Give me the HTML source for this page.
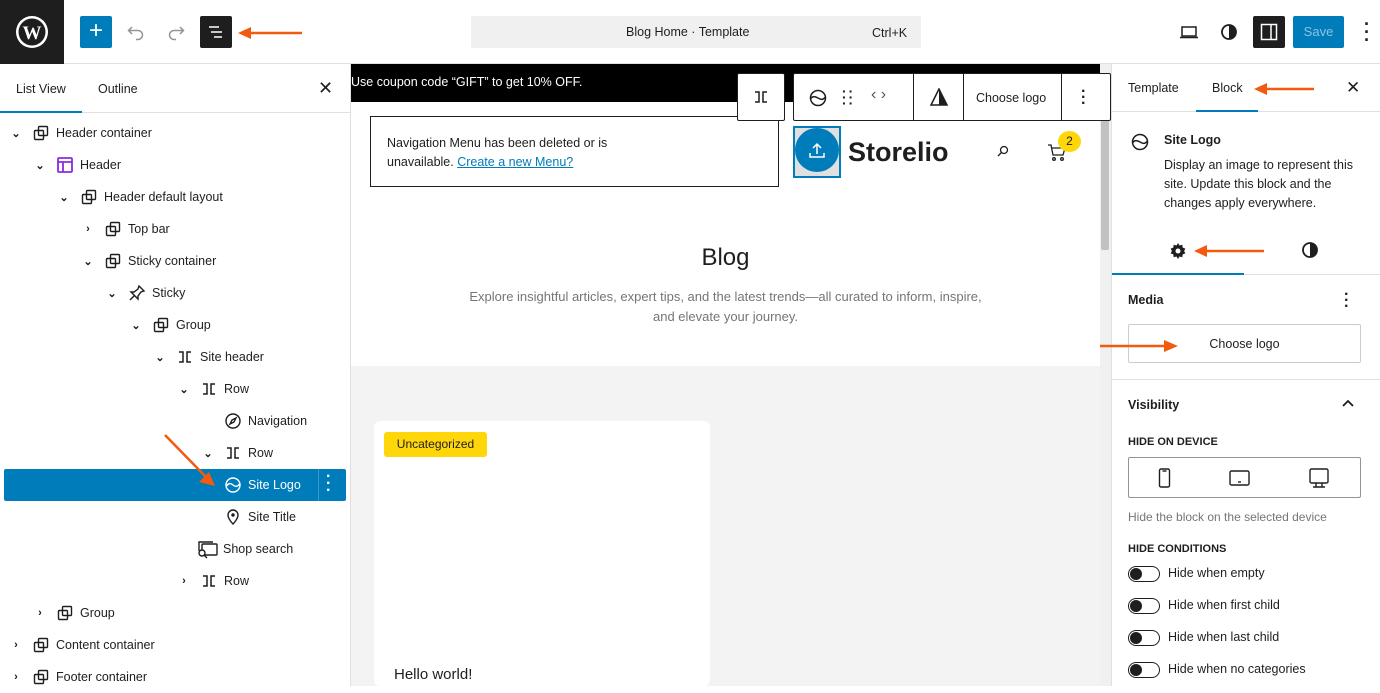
<!DOCTYPE html>
<html><head><meta charset="utf-8"><style>
*{box-sizing:border-box;margin:0;padding:0}
body{width:1380px;height:686px;overflow:hidden;background:#fff;font-family:"Liberation Sans",sans-serif;color:#1e1e1e;position:relative;font-size:12.5px}
.a{position:absolute}
.row{position:absolute;height:32px;display:flex;align-items:center;font-size:12.5px;color:#1e1e1e}
.row svg{flex:none}
.chev{width:16px;font-size:11px;text-align:center;font-weight:bold}
.lbl{margin-left:6px}
.tg{position:absolute;left:1128px;width:32px;height:16px;border:1px solid #1e1e1e;border-radius:8px}
.tg:before{content:"";position:absolute;left:1px;top:1px;width:12px;height:12px;border-radius:50%;background:#1e1e1e}
.tl{position:absolute;left:1168px;font-size:12.5px}
</style></head><body>
<div class="a" style="left:0;top:0;width:1380px;height:64px;border-bottom:1px solid #e0e0e0"></div>
<div class="a" style="left:0;top:0;width:64px;height:64px;background:#1e1e1e"></div>
<svg class="a" style="left:15px;top:15px" width="34" height="34" viewBox="0 0 34 34"><circle cx="17" cy="17" r="16" fill="#fff"/><circle cx="17" cy="17" r="13.5" fill="#1e1e1e"/><text x="17" y="24" text-anchor="middle" font-family="Liberation Serif" font-weight="bold" font-size="19" fill="#fff">W</text></svg>
<div class="a" style="left:80px;top:16px;width:32px;height:32px;background:#007cba;border-radius:2px;color:#fff;font-size:24px;line-height:30px;text-align:center">+</div>
<svg class="a" style="left:126px;top:22px" width="20" height="20" viewBox="0 0 20 20" fill="none" stroke="#949494" stroke-width="1.5"><path d="M6 5L2.5 8.5 6 12M3 8.5h9a4.5 4.5 0 010 9H10"/></svg>
<svg class="a" style="left:166px;top:22px" width="20" height="20" viewBox="0 0 20 20" fill="none" stroke="#949494" stroke-width="1.5"><path d="M14 5l3.5 3.5L14 12M17 8.5H8a4.5 4.5 0 000 9h2"/></svg>
<div class="a" style="left:200px;top:16px;width:32px;height:32px;background:#1e1e1e;border-radius:2px"></div>
<svg class="a" style="left:204px;top:20px" width="24" height="24" viewBox="0 0 24 24" stroke="#fff" stroke-width="1.5"><path d="M5 7h10M7 12h11M10 17h8"/></svg>
<svg class="a" style="left:236px;top:25px" width="68" height="16"><path d="M66 8H12" stroke="#f15a0f" stroke-width="2.5"/><path d="M2 8l13-6v12z" fill="#f15a0f"/></svg>
<div class="a" style="left:471px;top:16px;width:450px;height:32px;background:#f0f0f0;border-radius:2px"></div>
<div class="a" style="left:626px;top:25px">Blog Home · Template</div>
<div class="a" style="left:872px;top:26px">Ctrl+K</div>
<svg class="a" style="left:1178px;top:22px" width="22" height="20" viewBox="0 0 22 20" fill="none" stroke="#1e1e1e" stroke-width="1.5"><rect x="4" y="5" width="14" height="9"/><path d="M2 15.5h18"/></svg>
<svg class="a" style="left:1220px;top:23px" width="18" height="18" viewBox="0 0 18 18"><circle cx="9" cy="9" r="7" fill="none" stroke="#1e1e1e" stroke-width="1.8"/><path d="M9 2a7 7 0 010 14z" fill="#1e1e1e"/></svg>
<div class="a" style="left:1253px;top:16px;width:32px;height:32px;background:#1e1e1e;border-radius:2px"></div>
<svg class="a" style="left:1259px;top:22px" width="20" height="20" viewBox="0 0 20 20" fill="none" stroke="#fff" stroke-width="1.5"><rect x="2.5" y="2.5" width="15" height="15"/><path d="M12 3v14"/></svg>
<div class="a" style="left:1293px;top:16px;width:51px;height:32px;background:#007cba;border-radius:2px;color:#8cc3e3;font-size:13px;line-height:32px;text-align:center">Save</div>
<div class="a" style="left:1362px;top:20px;font-size:18px;line-height:8px;font-weight:bold;width:10px;text-align:center">·<br>·<br>·</div>

<div class="a" style="left:350px;top:64px;width:1px;height:622px;background:#e0e0e0"></div>
<div class="a" style="left:0;top:112px;width:350px;height:1px;background:#e0e0e0"></div>
<div class="a" style="left:0;top:111px;width:82px;height:2px;background:#007cba"></div>
<div class="a" style="left:16px;top:82px">List View</div>
<div class="a" style="left:98px;top:82px">Outline</div>
<div class="a" style="left:318px;top:78px;font-size:18px">✕</div>
<div class="a" style="left:4px;top:469px;width:342px;height:32px;background:#007cba;border-radius:2px"></div>
<div class="a" style="left:318px;top:469px;width:1px;height:32px;background:#3d97cb"></div>
<div class="a" style="left:326px;top:473px;color:#fff;font-size:16px;line-height:7px;font-weight:bold">·<br>·<br>·</div>
<svg width="0" height="0" style="position:absolute"><defs>
<g id="grp"><rect x="2.5" y="6.5" width="9" height="9" rx="1" fill="none" stroke="#1e1e1e" stroke-width="1.4"/><rect x="6.5" y="2.5" width="9" height="9" rx="1" fill="none" stroke="#1e1e1e" stroke-width="1.4"/></g>
<g id="row"><path d="M3 4h4v10H3M15 4h-4v10h4" fill="none" stroke="#1e1e1e" stroke-width="1.5"/></g>
</defs></svg>
<div class="row" style="left:8px;top:117px"><span class="chev">⌄</span><svg width="18" height="18" style="margin-left:8px"><use href="#grp"/></svg><span class="lbl">Header container</span></div>
<div class="row" style="left:32px;top:149px"><span class="chev">⌄</span><svg width="18" height="18" style="margin-left:8px"><rect x="2" y="2" width="14" height="14" rx="1" fill="none" stroke="#8a2be2" stroke-width="1.8"/><path d="M2 6h14M7 6v10" stroke="#8a2be2" stroke-width="1.8"/></svg><span class="lbl">Header</span></div>
<div class="row" style="left:56px;top:181px"><span class="chev">⌄</span><svg width="18" height="18" style="margin-left:8px"><use href="#grp"/></svg><span class="lbl">Header default layout</span></div>
<div class="row" style="left:80px;top:213px"><span class="chev">›</span><svg width="18" height="18" style="margin-left:8px"><use href="#grp"/></svg><span class="lbl">Top bar</span></div>
<div class="row" style="left:80px;top:245px"><span class="chev">⌄</span><svg width="18" height="18" style="margin-left:8px"><use href="#grp"/></svg><span class="lbl">Sticky container</span></div>
<div class="row" style="left:104px;top:277px"><span class="chev">⌄</span><svg width="18" height="18" style="margin-left:8px" fill="none" stroke="#1e1e1e" stroke-width="1.4"><path d="M11 2l5 5-3 1-3 4 0 3-7-7 3 0 4-3zM6 12l-4 4"/></svg><span class="lbl">Sticky</span></div>
<div class="row" style="left:128px;top:309px"><span class="chev">⌄</span><svg width="18" height="18" style="margin-left:8px"><use href="#grp"/></svg><span class="lbl">Group</span></div>
<div class="row" style="left:152px;top:341px"><span class="chev">⌄</span><svg width="18" height="18" style="margin-left:8px"><use href="#row"/></svg><span class="lbl">Site header</span></div>
<div class="row" style="left:176px;top:373px"><span class="chev">⌄</span><svg width="18" height="18" style="margin-left:8px"><use href="#row"/></svg><span class="lbl">Row</span></div>
<div class="row" style="left:200px;top:405px"><span class="chev"></span><svg width="18" height="18" style="margin-left:8px" fill="none" stroke="#1e1e1e" stroke-width="1.4"><circle cx="9" cy="9" r="7"/><path d="M12 6l-4 2-2 4 4-2z"/></svg><span class="lbl">Navigation</span></div>
<div class="row" style="left:200px;top:437px"><span class="chev">⌄</span><svg width="18" height="18" style="margin-left:8px"><use href="#row"/></svg><span class="lbl">Row</span></div>
<div class="row" style="left:200px;top:469px;color:#fff"><span class="chev"></span><svg width="18" height="18" style="margin-left:8px" fill="none" stroke="#fff" stroke-width="1.4"><circle cx="9" cy="9" r="7"/><path d="M2.5 10c2-3 4-3 6.5-1s4.5 2 6.5-1"/></svg><span class="lbl">Site Logo</span></div>
<div class="row" style="left:200px;top:501px"><span class="chev"></span><svg width="18" height="18" style="margin-left:8px" fill="none" stroke="#1e1e1e" stroke-width="1.4"><path d="M9 16s-5-5-5-9a5 5 0 0110 0c0 4-5 9-5 9z"/><circle cx="9" cy="7" r="1" fill="#1e1e1e"/></svg><span class="lbl">Site Title</span></div>
<div class="row" style="left:176px;top:533px"><span class="chev"></span><svg width="22" height="20" style="margin-left:5px" fill="none" stroke="#1e1e1e" stroke-width="1.4"><rect x="5" y="5" width="15" height="11" rx="1"/><path d="M2 12V3h14"/><circle cx="5" cy="14" r="3" fill="#fff"/><path d="M7 16l3 3"/></svg><span class="lbl" style="margin-left:4px">Shop search</span></div>
<div class="row" style="left:176px;top:565px"><span class="chev">›</span><svg width="18" height="18" style="margin-left:8px"><use href="#row"/></svg><span class="lbl">Row</span></div>
<div class="row" style="left:32px;top:597px"><span class="chev">›</span><svg width="18" height="18" style="margin-left:8px"><use href="#grp"/></svg><span class="lbl">Group</span></div>
<div class="row" style="left:8px;top:629px"><span class="chev">›</span><svg width="18" height="18" style="margin-left:8px"><use href="#grp"/></svg><span class="lbl">Content container</span></div>
<div class="row" style="left:8px;top:661px"><span class="chev">›</span><svg width="18" height="18" style="margin-left:8px"><use href="#grp"/></svg><span class="lbl">Footer container</span></div>
<svg class="a" style="left:160px;top:430px" width="60" height="58"><path d="M5 5L46 47" stroke="#f15a0f" stroke-width="2.5"/><path d="M55 56l-16-4 10-10z" fill="#f15a0f"/></svg>

<div class="a" style="left:351px;top:64px;width:749px;height:622px;background:#fff"></div>
<div class="a" style="left:351px;top:366px;width:749px;height:320px;background:#f3f3f3"></div>
<div class="a" style="left:351px;top:64px;width:749px;height:38px;background:#000;color:#fff;padding:11px 0 0 0">Use coupon code “GIFT” to get 10% OFF.</div>
<div class="a" style="left:1100px;top:64px;width:11px;height:622px;background:#f0f0f0"></div>
<div class="a" style="left:1101px;top:80px;width:8px;height:170px;background:#c1c1c1;border-radius:2px"></div>
<div class="a" style="left:370px;top:116px;width:409px;height:71px;border:1px solid #1e1e1e;padding:17px 16px;line-height:19px">Navigation Menu has been deleted or is<br>unavailable. <span style="color:#007cba;text-decoration:underline">Create a new Menu?</span></div>
<div class="a" style="left:737px;top:73px;width:48px;height:48px;background:#fff;border:1px solid #1e1e1e;border-radius:2px"></div>
<svg class="a" style="left:752px;top:88px" width="18" height="18"><use href="#row"/></svg>
<div class="a" style="left:793px;top:73px;width:318px;height:48px;background:#fff;border:1px solid #1e1e1e;border-radius:2px"></div>
<svg class="a" style="left:808px;top:88px" width="20" height="20" fill="none" stroke="#1e1e1e" stroke-width="1.5"><circle cx="10" cy="10" r="7.5"/><path d="M2.5 11c2-3 4-3 7.5-1s5 2 7.5-1"/></svg>
<div class="a" style="left:842px;top:88px;font-size:14px;line-height:6px;letter-spacing:2px;font-weight:bold">··<br>··<br>··</div>
<div class="a" style="left:871px;top:86px;font-size:16px;color:#555">‹ ›</div>
<div class="a" style="left:913px;top:74px;width:1px;height:46px;background:#1e1e1e"></div>
<svg class="a" style="left:929px;top:88px" width="20" height="18"><path d="M10 1L2 17h16z" fill="none" stroke="#1e1e1e" stroke-width="1.5"/><path d="M10 1v16h8z" fill="#1e1e1e"/></svg>
<div class="a" style="left:963px;top:74px;width:1px;height:46px;background:#1e1e1e"></div>
<div class="a" style="left:976px;top:91px">Choose logo</div>
<div class="a" style="left:1061px;top:74px;width:1px;height:46px;background:#1e1e1e"></div>
<div class="a" style="left:1081px;top:89px;font-size:16px;line-height:6px;font-weight:bold">·<br>·<br>·</div>
<div class="a" style="left:793px;top:126px;width:48px;height:52px;border:2px solid #007cba;background:#e0e0e0"></div>
<div class="a" style="left:795px;top:128px;width:44px;height:44px;border-radius:50%;background:#007cba"></div>
<svg class="a" style="left:807px;top:140px" width="20" height="20" fill="none" stroke="#fff" stroke-width="1.5"><path d="M10 14V4M6 8l4-4 4 4M3 13v4h14v-4"/></svg>
<div class="a" style="left:848px;top:137px;font-size:27px;font-weight:bold">Storelio</div>
<svg class="a" style="left:996px;top:144px" width="14" height="14" fill="none" stroke="#1e1e1e" stroke-width="1.3"><circle cx="8" cy="6" r="3.5"/><path d="M5.5 8.5L2 12"/></svg>
<svg class="a" style="left:1046px;top:142px" width="22" height="20" fill="none" stroke="#1e1e1e" stroke-width="1.3"><path d="M2 3h3l2 10h10l2-7H6"/><circle cx="8" cy="17" r="1.3"/><circle cx="16" cy="17" r="1.3"/></svg>
<div class="a" style="left:1058px;top:131px;width:23px;height:21px;border-radius:50%;background:#ffd60a;font-size:12px;text-align:center;line-height:21px">2</div>
<div class="a" style="left:351px;top:244px;width:749px;text-align:center;font-size:24px">Blog</div>
<div class="a" style="left:351px;top:287px;width:749px;text-align:center;font-size:13px;color:#757575;line-height:20px">Explore insightful articles, expert tips, and the latest trends—all curated to inform, inspire,<br>and elevate your journey.</div>
<div class="a" style="left:374px;top:421px;width:336px;height:265px;background:#fff;border-radius:6px"></div>
<div class="a" style="left:384px;top:432px;width:103px;height:25px;background:#ffd60a;border-radius:3px;font-size:12px;text-align:center;line-height:25px">Uncategorized</div>
<div class="a" style="left:394px;top:666px;font-size:15px">Hello world!</div>

<div class="a" style="left:1111px;top:64px;width:1px;height:622px;background:#e0e0e0"></div>
<div class="a" style="left:1112px;top:111px;width:268px;height:1px;background:#e0e0e0"></div>
<div class="a" style="left:1196px;top:110px;width:62px;height:2px;background:#007cba"></div>
<div class="a" style="left:1128px;top:81px">Template</div>
<div class="a" style="left:1212px;top:81px">Block</div>
<svg class="a" style="left:1252px;top:81px" width="64" height="16"><path d="M62 8H12" stroke="#f15a0f" stroke-width="2.5"/><path d="M2 8l13-6v12z" fill="#f15a0f"/></svg>
<div class="a" style="left:1346px;top:78px;font-size:17px">✕</div>
<svg class="a" style="left:1130px;top:132px" width="20" height="20" fill="none" stroke="#1e1e1e" stroke-width="1.5"><circle cx="10" cy="10" r="7.5"/><path d="M2.5 11c2-3 4-3 7.5-1s5 2 7.5-1"/></svg>
<div class="a" style="left:1164px;top:133px;font-weight:bold">Site Logo</div>
<div class="a" style="left:1164px;top:156px;line-height:19px;width:210px">Display an image to represent this site. Update this block and the changes apply everywhere.</div>
<svg class="a" style="left:1168px;top:241px" width="20" height="20" viewBox="0 0 20 20"><path d="M10 2l1.5 2.5 2.8-.8.4 2.9 2.7 1-1.3 2.4 1.3 2.4-2.7 1-.4 2.9-2.8-.8L10 18l-1.5-2.5-2.8.8-.4-2.9-2.7-1L3.9 10 2.6 7.6l2.7-1 .4-2.9 2.8.8z" fill="#1e1e1e"/><circle cx="10" cy="10" r="2.5" fill="#fff"/></svg>
<svg class="a" style="left:1192px;top:243px" width="74" height="16"><path d="M72 8H12" stroke="#f15a0f" stroke-width="2.5"/><path d="M2 8l13-6v12z" fill="#f15a0f"/></svg>
<svg class="a" style="left:1301px;top:241px" width="18" height="18"><circle cx="9" cy="9" r="7" fill="none" stroke="#1e1e1e" stroke-width="1.8"/><path d="M9 2a7 7 0 010 14z" fill="#1e1e1e"/></svg>
<div class="a" style="left:1112px;top:274px;width:268px;height:1px;background:#e0e0e0"></div>
<div class="a" style="left:1112px;top:273px;width:132px;height:2px;background:#007cba"></div>
<div class="a" style="left:1128px;top:293px;font-weight:bold">Media</div>
<div class="a" style="left:1344px;top:292px;font-size:16px;line-height:6px;font-weight:bold">·<br>·<br>·</div>
<div class="a" style="left:1128px;top:324px;width:233px;height:39px;border:1px solid #ccc;border-radius:2px;text-align:center;line-height:38px">Choose logo</div>
<svg class="a" style="left:1098px;top:338px" width="82" height="16"><path d="M2 8H68" stroke="#f15a0f" stroke-width="2.5"/><path d="M80 8L66 2v12z" fill="#f15a0f"/></svg>
<div class="a" style="left:1112px;top:379px;width:268px;height:1px;background:#e0e0e0"></div>
<div class="a" style="left:1128px;top:398px;font-weight:bold">Visibility</div>
<svg class="a" style="left:1340px;top:396px" width="16" height="14" fill="none" stroke="#1e1e1e" stroke-width="1.8"><path d="M3 10l5-5 5 5"/></svg>
<div class="a" style="left:1128px;top:436px;font-size:11px;font-weight:bold">HIDE ON DEVICE</div>
<div class="a" style="left:1128px;top:457px;width:233px;height:41px;border:1px solid #949494;border-radius:2px"></div>
<svg class="a" style="left:1157px;top:467px" width="16" height="22" fill="none" stroke="#1e1e1e" stroke-width="1.4"><rect x="2.5" y="2" width="10" height="18" rx="1.5"/><path d="M5.5 4h4"/></svg>
<svg class="a" style="left:1228px;top:468px" width="24" height="20" fill="none" stroke="#1e1e1e" stroke-width="1.4"><rect x="2" y="3" width="19" height="14" rx="1.5"/><path d="M10 14h3"/></svg>
<svg class="a" style="left:1307px;top:467px" width="24" height="22" fill="none" stroke="#1e1e1e" stroke-width="1.4"><rect x="3" y="2" width="18" height="14" rx="1.5"/><path d="M9 16v4M15 16v4M6 20h12"/></svg>
<div class="a" style="left:1128px;top:510px;font-size:12px;color:#757575">Hide the block on the selected device</div>
<div class="a" style="left:1128px;top:543px;font-size:11px;font-weight:bold">HIDE CONDITIONS</div>
<div class="tg" style="top:566px"></div><div class="tl" style="top:566px">Hide when empty</div>
<div class="tg" style="top:598px"></div><div class="tl" style="top:598px">Hide when first child</div>
<div class="tg" style="top:630px"></div><div class="tl" style="top:630px">Hide when last child</div>
<div class="tg" style="top:662px"></div><div class="tl" style="top:662px">Hide when no categories</div>
</body></html>
